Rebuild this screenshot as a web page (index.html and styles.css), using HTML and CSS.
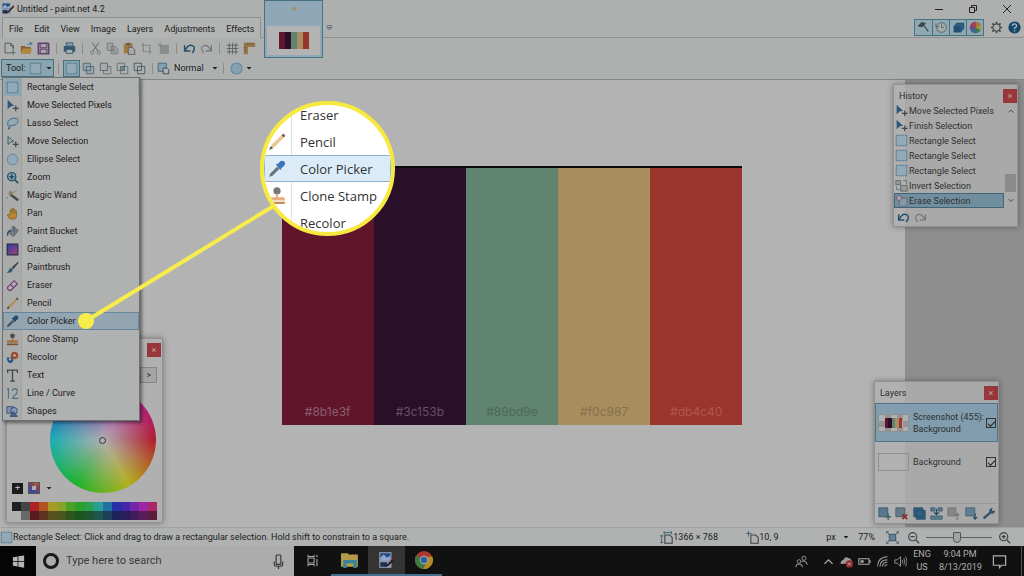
FILE: index.html
```html
<!DOCTYPE html>
<html lang="en">
<head>
<meta charset="utf-8">
<title>Untitled - paint.net 4.2</title>
<link rel="stylesheet" href="styles.css">
</head>
<body>
<svg class="sprite" aria-hidden="true">
  <defs>
    <linearGradient id="g-grad" x1="0" x2="1" y2="1"><stop offset="0" stop-color="#2a3bb0"/><stop offset="1" stop-color="#a8456f"/></linearGradient>
  </defs>
  <symbol id="i-rect" viewBox="0 0 16 16"><path d="M1.500 1.500h13v13h-13z" fill="#92a9b8" stroke="#456b86" stroke-dasharray="2 .6"/></symbol>
  <symbol id="i-movepx" viewBox="0 0 16 16"><path d="M2 1l8 7.500-4 .5-4 3.500z" fill="#2c5577"/><path d="M12 8v7M8.500 11.500h7" stroke="#444" stroke-width="1.500"/></symbol>
  <symbol id="i-movesel" viewBox="0 0 16 16"><path d="M2.500 2l7 6-3.500.5-3.500 3z" fill="none" stroke="#3d5c66" stroke-width="1.200"/><path d="M12 8v7M8.500 11.500h7" stroke="#444" stroke-width="1.500"/></symbol>
  <symbol id="i-lasso" viewBox="0 0 16 16"><path d="M2 8C2 3 8 1 13 1.500c3 1 2 7-2 8.500-3 1-5-.5-6.500 1C7 12 5 15 2.500 15c2-2 .5-3.500 0-4.500z" fill="#92a9b8" stroke="#3f6686" stroke-width="1.200"/></symbol>
  <symbol id="i-ellipse" viewBox="0 0 16 16"><circle cx="8" cy="8" r="6.500" fill="#92a9b8" stroke="#57809c"/></symbol>
  <symbol id="i-quality" viewBox="0 0 16 16"><path d="M5 1.500h6v1h2v2h1.500v7H13v2h-2v1H5v-1H3v-2H1.500v-7H3v-2h2z" fill="#86a2b2" stroke="#57809c"/></symbol>
  <symbol id="i-zoom" viewBox="0 0 16 16"><circle cx="7" cy="7" r="5" fill="#8ca7b7" stroke="#2e566b" stroke-width="1.800"/><path d="M7 4v6M4 7h6M11 11l4 4" stroke="#294d62" stroke-width="2"/></symbol>
  <symbol id="i-zoomout" viewBox="0 0 16 16"><circle cx="7" cy="7" r="5" fill="none" stroke="#3c454a" stroke-width="1.400"/><path d="M4.500 7h5M11 11l4 4" stroke="#3c454a" stroke-width="1.600"/></symbol>
  <symbol id="i-zoomin" viewBox="0 0 16 16"><circle cx="7" cy="7" r="5" fill="none" stroke="#3c454a" stroke-width="1.400"/><path d="M4.500 7h5M7 4.500v5M11 11l4 4" stroke="#3c454a" stroke-width="1.600"/></symbol>
  <symbol id="i-wand" viewBox="0 0 16 16"><path d="M6 7l9 7" stroke="#444" stroke-width="3"/><path d="M1 6l3-1 1-4 2 3 3-1-2 3 1 2-3-1-2 2-.5-3z" fill="#8b7a60"/><path d="M10 4l3-2M2 10l-1 2" stroke="#7b6a46"/></symbol>
  <symbol id="i-pan" viewBox="0 0 16 16"><path d="M5 9V4q1-1.500 2 0V2q1-1.500 2 0v1q1-1.500 2 0v2q1-1 2 0v6q0 4-4 4H7q-3 0-5.500-5 1-2 3.500 0z" fill="#b98636" stroke="#77551f" stroke-width=".8"/><path d="M7 4v4M9 3v5M11 5v3" stroke="#77551f" stroke-width=".7"/></symbol>
  <symbol id="i-bucket" viewBox="0 0 16 16"><path d="M5 7l5-5 5 5-6 7-4-3z" fill="#778086" stroke="#4b5359"/><path d="M10 9V3q-2-3-3 0" fill="none" stroke="#3d454a"/><path d="M6 6q-5 0-5 6 1 3 2 0 0-4 4-4z" fill="#2c5070"/></symbol>
  <symbol id="i-gradient" viewBox="0 0 16 16"><path d="M1.500 1.500h13v13h-13z" fill="url(#g-grad)" stroke="#282d43" stroke-width="1.500"/></symbol>
  <symbol id="i-brush" viewBox="0 0 16 16"><path d="M14.500 1L7 8l2 2 6.500-8z" fill="#3b4246"/><path d="M6.500 8.500l2 2q-1 5-8 3.500 3-1 3-3t3-2.500z" fill="#2c5a7a"/></symbol>
  <symbol id="i-eraser" viewBox="0 0 16 16"><path d="M2 10L10 2l4 4-8 8H4l-2-2z" fill="#b7a7b5" stroke="#6d3472" stroke-width="1.300"/><path d="M5.500 6.500l4 4" stroke="#6d3472" stroke-width="1.300"/></symbol>
  <symbol id="i-pencil" viewBox="0 0 16 16"><path d="M2 14l1.500-4L12 2l2 2-8 8.500z" fill="#b58e5e"/><path d="M12 2l1.500-1.500 2 2L14 4z" fill="#5b4548"/><path d="M1 15l1.500-3.500 2 2z" fill="#383535"/></symbol>
  <symbol id="i-picker" viewBox="0 0 16 16"><path d="M1 15l1-3 6-6 2 2-6 6z" fill="#4e555b"/><path d="M7 4l2-1 2-2q3-1 4 1 1 2-1 3.500l-2 1.500-1 2z" fill="#254a70"/></symbol>
  <symbol id="i-stamp" viewBox="0 0 16 16"><circle cx="8" cy="3.500" r="3" fill="#4e4c4a"/><path d="M7 6h2v3h5q1 0 1 3H1q0-3 1-3h5z" fill="#a2703f"/><path d="M1 13h14v2H1z" fill="#76522f"/></symbol>
  <symbol id="i-recolor" viewBox="0 0 16 16"><circle cx="10.500" cy="5.500" r="4.500" fill="#a14b27"/><circle cx="10.500" cy="5.500" r="1.700" fill="#b8aaa3"/><path d="M1 8h7l1 4q-1 3-4 3-4-1-4-7z" fill="#2b5583"/><circle cx="5" cy="10" r="1.500" fill="#9cacba"/></symbol>
  <symbol id="i-text" viewBox="0 0 16 16"><path d="M2 5V1.500h12V5M8 1.500V15M5 15h6" fill="none" stroke="#41464c" stroke-width="1.600"/></symbol>
  <symbol id="i-line" viewBox="0 0 16 16"><path d="M1 3l2-1v12M8 5q0-3 3-3t3 3q0 3-3 5t-3 4h7" fill="none" stroke="#4e6f80" stroke-width="1.400"/></symbol>
  <symbol id="i-shapes" viewBox="0 0 16 16"><path d="M1 2h8v8H1z" fill="#7d8faf" stroke="#2f4668"/><circle cx="10" cy="7" r="4" fill="#8796b5" stroke="#2f4668"/><path d="M9 8l5 6H5z" fill="#50618c" stroke="#2f4668"/></symbol>
  <symbol id="i-new" viewBox="0 0 16 16"><path d="M2.500 1.500h7l3 3v3M12.500 10v-5.500h-3v-3M2.500 1.500v12h7" fill="none" stroke="#4a4c4c"/><path d="M12.500 10v6M9.500 13h6" stroke="#3e6651"/></symbol>
  <symbol id="i-open" viewBox="0 0 16 16"><path d="M1 5h5l1 1h6v8H1z" fill="#83602c"/><path d="M3 8h12l-2 6H1z" fill="#b3873f"/><path d="M9 4q2-3 5-2M12 0l3 2-3 2" fill="none" stroke="#31658b"/></symbol>
  <symbol id="i-save" viewBox="0 0 16 16"><path d="M1.500 1.500h12l1 1v12h-13z" fill="#9b84a0" stroke="#5d3765" stroke-width="1.600"/><path d="M4 2h8v5H4zM4 9h8v5H4z" fill="#a8a6a9" stroke="#5d3765"/></symbol>
  <symbol id="i-print" viewBox="0 0 16 16"><path d="M4 1h8v4H4z" fill="#91a0a8" stroke="#2f4e62"/><path d="M1 5h14v7H1z" fill="#345a74"/><path d="M4 9h8v5H4z" fill="#aaafb1" stroke="#2f4e62"/></symbol>
  <symbol id="i-cut" viewBox="0 0 16 16"><path d="M4 1l7 10M12 1L5 11" stroke="#6e7070" stroke-width="1.300"/><circle cx="4" cy="13" r="2" fill="none" stroke="#6e7070"/><circle cx="12" cy="13" r="2" fill="none" stroke="#6e7070"/></symbol>
  <symbol id="i-copy" viewBox="0 0 16 16"><path d="M1.500 1.500h7v9h-7zM6.500 5.500h5l3 3v6h-8z" fill="#a1a3a2" stroke="#737575"/><path d="M8 9h4M8 12h4" stroke="#737575"/></symbol>
  <symbol id="i-paste" viewBox="0 0 16 16"><path d="M1 2h11v12H1z" fill="#a07a3f"/><path d="M4 1h5v3H4z" fill="#625a4c"/><path d="M6.500 6.500h5l3 3v6h-8z" fill="#a7a8a8" stroke="#555"/></symbol>
  <symbol id="i-crop" viewBox="0 0 16 16"><path d="M4 1v11h11M1 4h11v11" fill="none" stroke="#858787" stroke-width="1.500"/></symbol>
  <symbol id="i-desel" viewBox="0 0 16 16"><path d="M4 4h10v10H4z" fill="#8c8e8e" stroke="#777" stroke-dasharray="2 1"/><path d="M1 1l5 5M6 1L1 6" stroke="#777"/></symbol>
  <symbol id="i-undo" viewBox="0 0 16 16"><path d="M2 4v7h7M2.500 10.500q4-8 9-6 5 2 0 9" fill="none" stroke="#23516d" stroke-width="1.800"/></symbol>
  <symbol id="i-redo" viewBox="0 0 16 16"><path d="M14 4v7H7M13.500 10.500q-4-8-9-6-5 2 0 9" fill="none" stroke="#6f7475" stroke-width="1.400"/></symbol>
  <symbol id="i-grid" viewBox="0 0 16 16"><path d="M4 1v14M8 1v14M12 1v14M1 4h14M1 8h14M1 12h14" stroke="#575959"/></symbol>
  <symbol id="i-ruler" viewBox="0 0 16 16"><path d="M1 1h14v5H6v9H1z" fill="#94754a"/><path d="M6 1v2M9 1v2M12 1v2M1 7h2M1 10h2" stroke="#5b482c"/></symbol>
  <symbol id="i-sel2" viewBox="0 0 16 16"><path d="M1.500 1.500h9v9h-9zM5.500 5.500h9v9h-9z" fill="#8fa5af" stroke="#4a626d"/></symbol>
  <symbol id="i-sel3" viewBox="0 0 16 16"><path d="M5.500 5.500h9v9h-9z" fill="none" stroke="#62686a"/><path d="M1.500 1.500h9v9h-9z" fill="#a5abad" stroke="#50605f"/></symbol>
  <symbol id="i-sel4" viewBox="0 0 16 16"><path d="M1.500 1.500h9v9h-9zM5.500 5.500h9v9h-9z" fill="none" stroke="#62686a"/><path d="M6 6h4v4H6z" fill="#7a99aa" stroke="#4b6573"/></symbol>
  <symbol id="i-sel5" viewBox="0 0 16 16"><path d="M1.500 1.500h9v9h-9zM5.500 5.500h9v9h-9z" fill="none" stroke="#4d5e66" stroke-width="1.200"/></symbol>
  <symbol id="i-blend" viewBox="0 0 16 16"><path d="M1.500 1.500h10v10h-10z" fill="#83a0b0" stroke="#3b5f72"/><path d="M7.500 7.500h5l2 2v5h-7z" fill="#afb1b1" stroke="#383d40"/></symbol>
  <symbol id="i-down" viewBox="0 0 8 8"><path d="M1.500 3h5L4 5.500z" fill="#222"/></symbol>
  <symbol id="i-hammer" viewBox="0 0 16 16"><path d="M2 6l4-4 4 1-4 4zM8 5l6 8" fill="#3c4548" stroke="#3c4548" stroke-width="1.300"/></symbol>
  <symbol id="i-clock" viewBox="0 0 16 16"><circle cx="8" cy="8" r="6" fill="#a7aaaa" stroke="#687577" stroke-width="1.300"/><path d="M8 4v4h3M1 3v4h4" fill="none" stroke="#526166"/></symbol>
  <symbol id="i-layers" viewBox="0 0 16 16"><path d="M2 6l4-4h9v7l-4 5H2z" fill="#234c70"/><path d="M2 6h9v8M11 6l4-4M4 4h9v7" fill="none" stroke="#46718f" stroke-width=".8"/></symbol>
  <symbol id="i-colors" viewBox="0 0 16 16"><circle cx="8" cy="8" r="7" fill="#84427d"/><path d="M8 8V1a7 7 0 0 1 6 3.500z" fill="#a8772d"/><path d="M8 8l6-3.500a7 7 0 0 1 0 7z" fill="#a59a34"/><path d="M8 8l6 3.500A7 7 0 0 1 8 15z" fill="#397a4c"/><path d="M8 8v7a7 7 0 0 1-6-3.500z" fill="#2f6c90"/><path d="M8 8L2 4.500A7 7 0 0 1 8 1z" fill="#a6414e"/></symbol>
  <symbol id="i-gear" viewBox="0 0 16 16"><circle cx="8" cy="8" r="4.500" fill="none" stroke="#40474a" stroke-width="1.500"/><path d="M8 1v2M8 13v2M1 8h2M13 8h2M3 3l1.500 1.500M11.500 11.500L13 13M13 3l-1.500 1.500M4.500 11.500L3 13" stroke="#40474a" stroke-width="2"/></symbol>
  <symbol id="i-help" viewBox="0 0 16 16"><circle cx="8" cy="8" r="7.500" fill="#174668"/><path d="M5.500 6q0-2.500 2.500-2.500T10.500 6q0 1.500-2.500 2.500v1.500M8 11.500v1.500" fill="none" stroke="#b3bcc2" stroke-width="1.500"/></symbol>
  <symbol id="i-logo" viewBox="0 0 16 16"><path d="M1 1h11v14H1z" fill="#8d9aab"/><path d="M2 2h9v6H2z" fill="#234a86"/><path d="M2 6l3-3 3 3 3-2v4H2z" fill="#8fa9c6"/><path d="M2 10h6v4H2z" fill="#1f2f52"/><path d="M15.500 4l-7 7.500-3 2.500 4-1 6.500-7z" fill="#2a1c28"/><path d="M15.500 4l-3 3.200 1.200 1.200L16 6z" fill="#6d2a2f"/></symbol>
  <symbol id="i-invert" viewBox="0 0 16 16"><path d="M1 2h6v5H1zM7 8h8v7H7z" fill="#999" stroke="#5d6265"/><path d="M10 2h4v4M2 9v4h4" fill="none" stroke="#536779"/></symbol>
  <symbol id="i-erasesel" viewBox="0 0 16 16"><path d="M5 5h10v10H5z" fill="#8799a7" stroke="#566473"/><path d="M1 5l4-4 4 4-4 4z" fill="#aaa0ab" stroke="#6c4b72"/></symbol>
  <symbol id="i-layadd" viewBox="0 0 16 16"><path d="M1 1h11v11H1z" fill="#54788f" stroke="#345a73"/><path d="M12.500 8v8M8.500 12h8" stroke="#3d6656" stroke-width="1.600"/></symbol>
  <symbol id="i-laydel" viewBox="0 0 16 16"><path d="M1 1h11v11H1z" fill="#667b87" stroke="#405b6c"/><path d="M9 9l6 6M15 9l-6 6" stroke="#8d292b" stroke-width="2"/></symbol>
  <symbol id="i-laydup" viewBox="0 0 16 16"><path d="M1 1h11v11H1zM4 4h11v11H4z" fill="#315e7d" stroke="#224c69"/></symbol>
  <symbol id="i-laymerge" viewBox="0 0 16 16"><path d="M1 1h5v4H1zM10 1h5v4h-5zM1 11h14v4H1z" fill="#5a7b8e" stroke="#395c70"/><path d="M8 2v7M5 6.500l3 3 3-3" fill="none" stroke="#234c64" stroke-width="1.500"/></symbol>
  <symbol id="i-layup" viewBox="0 0 16 16"><path d="M1 1h10v10H1z" fill="#858787" stroke="#777"/><path d="M12.500 16V8M10 10.500L12.500 8l2.500 2.500" fill="none" stroke="#717373" stroke-width="1.400"/></symbol>
  <symbol id="i-laydown" viewBox="0 0 16 16"><path d="M1 1h11v10H1z" fill="#607e90" stroke="#395d73"/><path d="M12.500 8v7M10 12.500l2.500 2.500 2.500-2.500" fill="none" stroke="#244b67" stroke-width="1.500"/></symbol>
  <symbol id="i-wrench" viewBox="0 0 16 16"><path d="M1 13l8-7q-1-4 4-5l-1 3 2 1 2-1q0 5-5 4l-8 7z" fill="#2d536e"/></symbol>
  <symbol id="i-size" viewBox="0 0 16 16"><path d="M6 5h6l3 3v7H6z" fill="none" stroke="#3b4144" stroke-width="1.300"/><path d="M5 2h9M5 0v4M14 0v4M2 5v10M0 6h4M0 14h4" stroke="#31566b"/></symbol>
  <symbol id="i-pos" viewBox="0 0 16 16"><path d="M6 5h6l3 3v7H6z" fill="none" stroke="#3b4144" stroke-width="1.300"/><path d="M0 3h7M3 0v7" stroke="#31566b"/></symbol>
  <symbol id="i-fit" viewBox="0 0 16 16"><path d="M4 4h8v8H4z" fill="#648093" stroke="#274a61"/><path d="M1 1l4 4M15 1l-4 4M1 15l4-4M15 15l-4-4M0 4V0h4M12 0h4v4M0 12v4h4M12 16h4v-4" stroke="#31546a" fill="none" stroke-width="1.200"/></symbol>
  <symbol id="i-win" viewBox="0 0 16 16"><path d="M2 3.500l5-.8v5H2zM7.800 2.500L14 1.500v6.200H7.800zM2 8.400h5v5l-5-.8zM7.800 8.400H14v6.200l-6.200-1z" fill="#b5b5b5"/></symbol>
  <symbol id="i-mic" viewBox="0 0 16 16"><rect x="5.500" y="1" width="5" height="10" rx="1" fill="none" stroke="#333" stroke-width="1.200"/><path d="M3.500 8v3q0 2 2.500 2h4q2.500 0 2.500-2V8M8 13v3" fill="none" stroke="#333" stroke-width="1.200"/></symbol>
  <symbol id="i-tasks" viewBox="0 0 16 16"><path d="M2.500 5h7.500v6H2.500zM2.500 1v2H10V1M2.500 15v-2H10v2M13.500 1v3M13.500 6v9" fill="none" stroke="#a8a8a8" stroke-width="1.300"/></symbol>
  <symbol id="i-folder" viewBox="0 0 16 16"><path d="M0 2h6l1 1h8v11H0z" fill="#b49a4b"/><path d="M2 8h12v7h-3v-4H5v4H2z" fill="#3a8399"/></symbol>
  <symbol id="i-chrome" viewBox="0 0 16 16"><circle cx="8" cy="8" r="8" fill="#ac382f"/><path d="M8 8L1 4a8 8 0 0 0 6 12l4-7z" fill="#3a7d3f"/><path d="M8 5h7.400A8 8 0 0 1 7 16l4-7z" fill="#b38c27"/><circle cx="8" cy="8" r="3.700" fill="#b2b2b2"/><circle cx="8" cy="8" r="2.900" fill="#2c5f9f"/></symbol>
  <symbol id="i-people" viewBox="0 0 16 16"><circle cx="5" cy="8" r="2.200" fill="none" stroke="#aaa"/><circle cx="11" cy="4" r="2.500" fill="none" stroke="#aaa"/><path d="M1 15q0-4 4-4t4 4M8 8q3-2 6 1l1 3" fill="none" stroke="#aaa" stroke-width="1.200"/></symbol>
  <symbol id="i-cloud" viewBox="0 0 16 16"><path d="M1 11q-1-4 3-5 2-5 7-2 4 1 4 6z" fill="#999"/><circle cx="11.500" cy="11" r="4.500" fill="#922a2c"/><path d="M9.500 9l4 4M13.500 9l-4 4" stroke="#bbb"/></symbol>
  <symbol id="i-battery" viewBox="0 0 16 16"><path d="M1 4.500h12.500v7H1zM15 6.500v3" fill="none" stroke="#aaa" stroke-width="1.300"/><path d="M3 6.500h4v3H3z" fill="#aaa"/></symbol>
  <symbol id="i-wifi" viewBox="0 0 16 16"><path d="M2 14Q2 3 14 2M5 14q0-8 9-8M8 14q0-5 6-5M11 14q0-2 3-2" fill="none" stroke="#999" stroke-width="1.300"/></symbol>
  <symbol id="i-volume" viewBox="0 0 16 16"><path d="M1 6h3l4-4v12l-4-4H1z" fill="none" stroke="#aaa"/><path d="M10 6q1.500 2 0 4M12 4q3 4 0 8M14 2q4 6 0 12" fill="none" stroke="#aaa"/></symbol>
  <symbol id="i-note" viewBox="0 0 16 16"><path d="M1.500 2h13v10H10l-2 2.500V12H1.500z" fill="none" stroke="#b0b0b0" stroke-width="1.300"/></symbol>
  <symbol id="i-up" viewBox="0 0 16 16"><path d="M3 11l5-5 5 5" fill="none" stroke="currentColor" stroke-width="1.500"/></symbol>
  <symbol id="i-dn" viewBox="0 0 16 16"><path d="M3 6l5 5 5-5" fill="none" stroke="currentColor" stroke-width="1.500"/></symbol>
</svg>

<div class="desktop">
  <header class="ribbon">
    <div class="titlebar">
      <svg class="ico"><use href="#i-logo"/></svg>
      <h1 class="title">Untitled - paint.net 4.2</h1>
      <div class="winbtns">
        <button aria-label="Minimize"><svg class="glyph" viewBox="0 0 10 10"><path d="M1 5.500h8"/></svg></button>
        <button aria-label="Restore"><svg class="glyph" viewBox="0 0 10 10"><path d="M1.500 3.500h5v5h-5zM3.500 3V1.500h5v5H7"/></svg></button>
        <button aria-label="Close"><svg class="glyph" viewBox="0 0 10 10"><path d="M1 1l8 8M9 1l-8 8"/></svg></button>
      </div>
    </div>
    <div class="menurow">
      <nav class="menubar">
        <button>File</button><button>Edit</button><button>View</button><button>Image</button><button>Layers</button><button>Adjustments</button><button>Effects</button>
      </nav>
      <div class="menufill"></div>
      <div class="utility">
        <div class="toggles">
          <button aria-label="Tools"><svg class="ico"><use href="#i-hammer"/></svg></button>
          <button aria-label="History"><svg class="ico"><use href="#i-clock"/></svg></button>
          <button aria-label="Layers"><svg class="ico"><use href="#i-layers"/></svg></button>
          <button aria-label="Colors"><svg class="ico"><use href="#i-colors"/></svg></button>
        </div>
        <button class="slot" aria-label="Settings"><svg class="ico"><use href="#i-gear"/></svg></button>
        <button class="slot" aria-label="Help"><svg class="ico"><use href="#i-help"/></svg></button>
      </div>
    </div>
    <div class="toolrow">
      <button class="slot" aria-label="New"><svg class="ico"><use href="#i-new"/></svg></button>
      <button class="slot" aria-label="Open"><svg class="ico"><use href="#i-open"/></svg></button>
      <button class="slot" aria-label="Save"><svg class="ico"><use href="#i-save"/></svg></button>
      <i class="sep"></i>
      <button class="slot" aria-label="Print"><svg class="ico"><use href="#i-print"/></svg></button>
      <i class="sep"></i>
      <button class="slot" aria-label="Cut"><svg class="ico"><use href="#i-cut"/></svg></button>
      <button class="slot" aria-label="Copy"><svg class="ico"><use href="#i-copy"/></svg></button>
      <button class="slot" aria-label="Paste"><svg class="ico"><use href="#i-paste"/></svg></button>
      <button class="slot" aria-label="Crop"><svg class="ico"><use href="#i-crop"/></svg></button>
      <button class="slot" aria-label="Deselect"><svg class="ico"><use href="#i-desel"/></svg></button>
      <i class="sep"></i>
      <button class="slot" aria-label="Undo"><svg class="ico"><use href="#i-undo"/></svg></button>
      <button class="slot" aria-label="Redo"><svg class="ico"><use href="#i-redo"/></svg></button>
      <i class="sep"></i>
      <button class="slot" aria-label="Grid"><svg class="ico"><use href="#i-grid"/></svg></button>
      <button class="slot" aria-label="Rulers"><svg class="ico"><use href="#i-ruler"/></svg></button>
    </div>
    <div class="toolrow">
      <button class="toolpick">Tool:<svg class="ico"><use href="#i-rect"/></svg><svg class="caret"><use href="#i-down"/></svg></button>
      <i class="sep"></i>
      <button class="slot slot-on" aria-label="Replace"><svg class="ico"><use href="#i-rect"/></svg></button>
      <button class="slot" aria-label="Add"><svg class="ico"><use href="#i-sel2"/></svg></button>
      <button class="slot" aria-label="Subtract"><svg class="ico"><use href="#i-sel3"/></svg></button>
      <button class="slot" aria-label="Intersect"><svg class="ico"><use href="#i-sel4"/></svg></button>
      <button class="slot" aria-label="Invert"><svg class="ico"><use href="#i-sel5"/></svg></button>
      <i class="sep"></i>
      <svg class="ico"><use href="#i-blend"/></svg>
      <select class="plain mode" aria-label="Selection mode"><option>Normal</option></select>
      <svg class="caret"><use href="#i-down"/></svg>
      <i class="sep"></i>
      <button class="slot" aria-label="Quality"><svg class="ico"><use href="#i-quality"/></svg></button>
      <svg class="caret"><use href="#i-down"/></svg>
    </div>
    <button class="doctab" aria-label="Untitled">
      <span class="star">✦</span>
      <span class="docthumb"><span class="mini"><i class="c1"></i><i class="c2"></i><i class="c3"></i><i class="c4"></i><i class="c5"></i></span></span>
    </button>
    <button class="doclist" aria-label="Image list"><svg class="listglyph" viewBox="0 0 10 10"><path d="M2 3h6M2 5q3 4 6 0z"/></svg></button>
  </header>

  <main class="workspace">
    <div class="swatches">
      <div class="swatch c1">#8b1e3f</div>
      <div class="swatch c2">#3c153b</div>
      <div class="swatch c3">#89bd9e</div>
      <div class="swatch c4">#f0c987</div>
      <div class="swatch c5">#db4c40</div>
    </div>
  </main>

  <footer class="status">
    <svg class="ico"><use href="#i-rect"/></svg>
    <p class="hint">Rectangle Select: Click and drag to draw a rectangular selection. Hold shift to constrain to a square.</p>
    <span class="stat stat-size"><svg class="ico"><use href="#i-size"/></svg>1366 × 768</span>
    <span class="stat stat-pos"><svg class="ico"><use href="#i-pos"/></svg>10, 9</span>
    <div class="zoombar">
      <select class="plain unit" aria-label="Units"><option>px</option></select>
      <svg class="caret"><use href="#i-down"/></svg>
      <span class="percent">77%</span>
      <button class="slot" aria-label="Fit"><svg class="ico"><use href="#i-fit"/></svg></button>
      <button class="slot" aria-label="Zoom out"><svg class="ico"><use href="#i-zoomout"/></svg></button>
      <input class="zoom" type="range" aria-label="Zoom" min="0" max="100" value="47">
      <button class="slot" aria-label="Zoom in"><svg class="ico"><use href="#i-zoomin"/></svg></button>
    </div>
  </footer>

  <div class="taskbar">
    <button class="start" aria-label="Start"><svg class="ico-m"><use href="#i-win"/></svg></button>
    <div class="search">
      <i class="ring"></i>
      <input class="searchbox" type="text" placeholder="Type here to search" aria-label="Search">
      <svg class="ico-m"><use href="#i-mic"/></svg>
    </div>
    <button class="task" aria-label="Task view"><svg class="ico"><use href="#i-tasks"/></svg></button>
    <button class="task task-open" aria-label="File Explorer"><svg class="ico-l"><use href="#i-folder"/></svg></button>
    <button class="task task-open task-active" aria-label="paint.net"><svg class="ico-l"><use href="#i-logo"/></svg></button>
    <button class="task task-open" aria-label="Chrome"><svg class="ico-l"><use href="#i-chrome"/></svg></button>
    <div class="tray">
      <svg class="ico people"><use href="#i-people"/></svg>
      <svg class="ico"><use href="#i-up"/></svg>
      <svg class="ico"><use href="#i-cloud"/></svg>
      <svg class="ico"><use href="#i-battery"/></svg>
      <svg class="ico"><use href="#i-wifi"/></svg>
      <svg class="ico"><use href="#i-volume"/></svg>
      <p class="two lang">ENG<br>US</p>
      <p class="two clock">9:04 PM<br>8/13/2019</p>
      <svg class="ico-m note"><use href="#i-note"/></svg>
    </div>
  </div>

  <section class="panel colors" aria-label="Colors">
    <div class="panelhead"><button class="close" aria-label="Close">×</button></div>
    <button class="more" aria-label="More">&gt;</button>
    <div class="wheel"><i class="knob"></i></div>
    <div class="colorbtns">
      <button class="swap" aria-label="Add color">+</button>
      <button class="pal" aria-label="Palette"></button>
      <svg class="caret"><use href="#i-down"/></svg>
    </div>
    <div class="palette">
      <i style="background:#1e1e1e"></i><i style="background:#444"></i><i style="background:#ad2023"></i><i style="background:#ae5524"></i><i style="background:#aa9a25"></i><i style="background:#86a227"></i><i style="background:#4ba025"></i><i style="background:#2a9f2a"></i><i style="background:#28a052"></i><i style="background:#289f96"></i><i style="background:#2470a5"></i><i style="background:#242fa8"></i><i style="background:#4526a8"></i><i style="background:#7226a8"></i><i style="background:#a027a3"></i><i style="background:#a9286a"></i>
      <i></i><i style="background:#686868"></i><i style="background:#591a1d"></i><i style="background:#5c341d"></i><i style="background:#5a521d"></i><i style="background:#48561d"></i><i style="background:#2d551d"></i><i style="background:#1d551f"></i><i style="background:#1d5533"></i><i style="background:#1d5551"></i><i style="background:#1d3f59"></i><i style="background:#1d225a"></i><i style="background:#2b1d5a"></i><i style="background:#401d5a"></i><i style="background:#561d57"></i><i style="background:#5a1d3d"></i>
    </div>
  </section>

  <section class="panel history" aria-label="History">
    <div class="panelhead"><h2 class="panelname">History</h2><button class="close" aria-label="Close">×</button></div>
    <div class="histbody">
      <ol class="histlist">
        <li><svg class="ico"><use href="#i-movepx"/></svg>Move Selected Pixels</li>
        <li><svg class="ico"><use href="#i-movepx"/></svg>Finish Selection</li>
        <li><svg class="ico"><use href="#i-rect"/></svg>Rectangle Select</li>
        <li><svg class="ico"><use href="#i-rect"/></svg>Rectangle Select</li>
        <li><svg class="ico"><use href="#i-rect"/></svg>Rectangle Select</li>
        <li><svg class="ico"><use href="#i-invert"/></svg>Invert Selection</li>
        <li class="current"><svg class="ico"><use href="#i-erasesel"/></svg>Erase Selection</li>
      </ol>
      <div class="scroll"><svg class="caret"><use href="#i-up"/></svg><i class="scrollthumb"></i><svg class="caret"><use href="#i-dn"/></svg></div>
    </div>
    <div class="histfoot">
      <button class="slot" aria-label="Undo"><svg class="ico"><use href="#i-undo"/></svg></button>
      <button class="slot" aria-label="Redo"><svg class="ico"><use href="#i-redo"/></svg></button>
    </div>
  </section>

  <section class="panel layers" aria-label="Layers">
    <div class="panelhead"><h2 class="panelname">Layers</h2><button class="close" aria-label="Close">×</button></div>
    <div class="layer layer-on">
      <span class="layerthumb checker"><span class="mini"><i class="c1"></i><i class="c2"></i><i class="c3"></i><i class="c4"></i><i class="c5"></i></span></span>
      <label class="layername" for="l1">Screenshot (455):<br>Background</label>
      <input id="l1" class="tick" type="checkbox" checked>
    </div>
    <div class="layer">
      <span class="layerthumb"></span>
      <label class="layername" for="l2">Background</label>
      <input id="l2" class="tick" type="checkbox" checked>
    </div>
    <div class="layerfoot">
      <button class="slot" aria-label="Add layer"><svg class="ico"><use href="#i-layadd"/></svg></button>
      <button class="slot" aria-label="Delete layer"><svg class="ico"><use href="#i-laydel"/></svg></button>
      <button class="slot" aria-label="Duplicate layer"><svg class="ico"><use href="#i-laydup"/></svg></button>
      <button class="slot" aria-label="Merge layer"><svg class="ico"><use href="#i-laymerge"/></svg></button>
      <button class="slot" aria-label="Move up"><svg class="ico"><use href="#i-layup"/></svg></button>
      <button class="slot" aria-label="Move down"><svg class="ico"><use href="#i-laydown"/></svg></button>
      <button class="slot" aria-label="Properties"><svg class="ico"><use href="#i-wrench"/></svg></button>
    </div>
  </section>

  <div class="toolmenu" role="menu">
    <button class="first" role="menuitem"><svg class="ico"><use href="#i-rect"/></svg>Rectangle Select</button>
    <button role="menuitem"><svg class="ico"><use href="#i-movepx"/></svg>Move Selected Pixels</button>
    <button role="menuitem"><svg class="ico"><use href="#i-lasso"/></svg>Lasso Select</button>
    <button role="menuitem"><svg class="ico"><use href="#i-movesel"/></svg>Move Selection</button>
    <button role="menuitem"><svg class="ico"><use href="#i-ellipse"/></svg>Ellipse Select</button>
    <button role="menuitem"><svg class="ico"><use href="#i-zoom"/></svg>Zoom</button>
    <button role="menuitem"><svg class="ico"><use href="#i-wand"/></svg>Magic Wand</button>
    <button role="menuitem"><svg class="ico"><use href="#i-pan"/></svg>Pan</button>
    <button role="menuitem"><svg class="ico"><use href="#i-bucket"/></svg>Paint Bucket</button>
    <button role="menuitem"><svg class="ico"><use href="#i-gradient"/></svg>Gradient</button>
    <button role="menuitem"><svg class="ico"><use href="#i-brush"/></svg>Paintbrush</button>
    <button role="menuitem"><svg class="ico"><use href="#i-eraser"/></svg>Eraser</button>
    <button role="menuitem"><svg class="ico"><use href="#i-pencil"/></svg>Pencil</button>
    <button class="picked" role="menuitem"><svg class="ico"><use href="#i-picker"/></svg>Color Picker</button>
    <button role="menuitem"><svg class="ico"><use href="#i-stamp"/></svg>Clone Stamp</button>
    <button role="menuitem"><svg class="ico"><use href="#i-recolor"/></svg>Recolor</button>
    <button role="menuitem"><svg class="ico"><use href="#i-text"/></svg>Text</button>
    <button role="menuitem"><svg class="ico"><use href="#i-line"/></svg>Line / Curve</button>
    <button role="menuitem"><svg class="ico"><use href="#i-shapes"/></svg>Shapes</button>
  </div>

  <svg class="pointer" viewBox="0 0 210 140" aria-hidden="true"><path d="M6 131L200 12" stroke="#f7ec4b" stroke-width="4"/><circle cx="6" cy="131" r="8" fill="#f7ec4b"/></svg>
  <div class="lens">
    <ul class="lenslist">
      <li>Eraser</li>
      <li><svg class="ico-l" viewBox="0 0 16 16"><path d="M2 14l1.500-4L12 2l2 2-8 8.500z" fill="#ebc795"/><path d="M12 2l1.500-1.500 2 2L14 4z" fill="#7b5b60"/><path d="M1 15l1.500-3.500 2 2z" fill="#555"/></svg>Pencil</li>
      <li class="lenspick"><svg class="ico-l" viewBox="0 0 16 16"><path d="M1 15l1-3 6-6 2 2-6 6z" fill="#6c747b"/><path d="M7 4l2-1 2-2q3-1 4 1 1 2-1 3.500l-2 1.500-1 2z" fill="#3c75bb"/></svg>Color Picker</li>
      <li><svg class="ico-l" viewBox="0 0 16 16"><circle cx="8" cy="3.500" r="3.200" fill="#777"/><path d="M7 6h2v3h5q1 0 1 3H1q0-3 1-3h5z" fill="#e9ad7c"/><path d="M1 13h14v2H1z" fill="#c78a5b"/></svg>Clone Stamp</li>
      <li>Recolor</li>
    </ul>
  </div>
</div>
</body>
</html>
```
FILE: styles.css
```css
* { box-sizing: border-box; }
body {
  margin: 0;
  font: 9px/12px Roboto, "Open Sans", sans-serif;
  color: #202020;
  background: #b0b2b1;
}
button, input, select { font: inherit; color: inherit; margin: 0; padding: 0; border: 0; background: none; }
h1, h2, p, ol, ul { margin: 0; padding: 0; font-size: inherit; font-weight: 400; list-style: none; }
i { display: block; }
.sprite { position: absolute; width: 0; height: 0; }
.ico { width: 13px; height: 13px; flex: none; }
.ico-m { width: 15px; height: 15px; flex: none; }
.ico-l { width: 18px; height: 18px; flex: none; }
.caret { width: 8px; height: 8px; flex: none; }
.glyph { width: 10px; height: 10px; fill: none; stroke: #222; }
.plain { appearance: none; }

.desktop { position: relative; display: flex; flex-direction: column; height: 100vh; overflow: hidden; }

.ribbon { position: relative; padding-bottom: 1px; background: #adb0af; border-bottom: 1px solid #858786; }
.titlebar { display: flex; align-items: center; height: 17px; padding-left: 1px; gap: 3px; }
.title { flex: 1; font-size: 9px; }
.winbtns { display: flex; }
.winbtns button { width: 34px; height: 16px; display: grid; place-items: center; }
.menurow { display: flex; height: 21px; }
.menubar { display: flex; align-items: center; gap: 11px; margin-left: 2px; padding: 2px 6px 0; border: 1px solid #8c9292; border-bottom: 0; background: #b2b4b3; }
.menufill { flex: 1; border-bottom: 1px solid #8c9292; }
.utility { display: flex; align-items: center; gap: 1px; padding-right: 1px; border-bottom: 1px solid #8c9292; }
.toggles { display: flex; border: 1px solid #45727f; margin-right: 3px; }
.toggles button { width: 17px; height: 15px; display: grid; place-items: center; background: #90a8b2; }
.toggles button + button { border-left: 1px solid #45727f; }
.slot { width: 17px; height: 17px; display: grid; place-items: center; flex: none; }
.slot-on { background: #87a3b0; border: 1px solid #46717e; }
.toolrow { display: flex; align-items: center; height: 20px; padding-left: 1px; }
.sep { width: 1px; height: 11px; margin: 0 4px; background: #8a8d8c; flex: none; }
.toolpick { display: flex; align-items: center; gap: 3px; width: 53px; height: 18px; padding: 0 4px; border: 1px solid #46717e; background: #8ba5b0; white-space: nowrap; }
.mode { width: 34px; margin: 0 3px 0 4px; }
.doctab { position: absolute; top: 0; left: 264px; width: 59px; height: 58px; padding: 2px; display: flex; flex-direction: column; border: 1px solid #46717e; background: #8fa7b7; }
.star { height: 23px; padding-left: 2px; line-height: 12px; color: #b08c54; }
.docthumb { flex: 1; align-self: stretch; display: grid; place-items: center; background: #b3b3b3; }
.mini { display: flex; width: 30px; height: 17px; }
.mini i { flex: 1; }
.doclist { position: absolute; top: 23px; left: 325px; }
.listglyph { width: 9px; height: 9px; fill: none; stroke: #556b7a; }

.c1 { background: #61152c; }
.c2 { background: #2a0f29; }
.c3 { background: #60846f; }
.c4 { background: #a88d5e; }
.c5 { background: #99352d; }

.workspace { flex: 1; display: flex; justify-content: center; align-items: flex-start; padding-top: 86px; background: linear-gradient(to left, #8e8e8e 119px, #b3b3b3 119px); }
.swatches { display: flex; width: 45%; height: 259px; border-top: 2px solid #0c0910; }
.swatch { flex: 1; display: flex; align-items: flex-end; justify-content: center; padding-bottom: 6px; font: 12px/14px Inter, sans-serif; color: #87606c; }
.swatch.c2 { color: #675266; }
.swatch.c3 { color: #4b6957; }
.swatch.c4 { color: #85704c; }
.swatch.c5 { color: #b2574e; }

.status { display: flex; align-items: center; height: 19px; background: #b0b2b1; border-top: 1px solid #a0a2a1; }
.hint { flex: 1; white-space: nowrap; }
.stat { display: flex; align-items: center; white-space: nowrap; }
.stat-size { width: 86px; }
.stat-pos { width: 80px; }
.zoombar { display: flex; align-items: center; gap: 4px; padding-right: 11px; }
.unit { width: 12px; }
.percent { margin: 0 5px 0 4px; }
.zoom { appearance: none; width: 66px; height: 12px; background: linear-gradient(#5d6060, #5d6060) center / 100% 1px no-repeat; }
.zoom::-webkit-slider-thumb { appearance: none; width: 8px; height: 11px; border: 1px solid #555; border-radius: 1px 1px 4px 4px; background: #a2a4a4; }

.taskbar { display: flex; height: 30px; background: #111; color: #b0b0b0; }
.start { width: 36px; display: grid; place-items: center; background: #050505; }
.search { width: 258px; display: flex; align-items: center; gap: 7px; padding: 0 8px 0 7px; background: #acacac; }
.ring { width: 16px; height: 16px; border: 3px solid #1a1a1a; border-radius: 50%; flex: none; }
.searchbox { flex: 1; min-width: 0; font-size: 11px; color: #333; outline: 0; }
.searchbox::placeholder { color: #3a3a3a; opacity: 1; }
.task { width: 37px; display: grid; place-items: center; border-bottom: 2px solid transparent; }
.task-open { border-bottom-color: #456f8d; }
.task-active { background: #343434; }
.tray { flex: 1; display: flex; align-items: center; justify-content: flex-end; gap: 5px; border-right: 1px solid #555; margin-right: 2px; }
.people { margin-right: 9px; }
.two { text-align: center; font-size: 9px; line-height: 13px; }
.lang { width: 18px; margin-left: 1px; }
.clock { width: 42px; margin-left: 3px; }
.note { margin: 0 14px 0 6px; }

.panel { position: absolute; display: flex; flex-direction: column; background: rgba(176, 176, 176, .8); border: 1px solid #929292; box-shadow: 0 0 6px rgba(0, 0, 0, .35); color: #303030; }
.panelhead { display: flex; align-items: flex-start; justify-content: space-between; height: 19px; padding: 4px 0 0 5px; }
.panelname { line-height: 14px; }
.close { width: 14px; height: 14px; margin-left: auto; background: #97373b; color: #c3a5a7; line-height: 12px; }

.colors { left: 6px; bottom: 53px; width: 157px; height: 185px; padding: 0 5px; background: #b0b0b0; }
.colors .panelhead { padding-right: 0; height: 28px; margin-right: -4px; }
.more { align-self: flex-end; width: 17px; height: 16px; border: 1px solid #858585; background: #a4a4a4; }
.wheel { align-self: center; width: 106px; height: 106px; margin: 4px 0 -11px 36px; display: grid; place-items: center; border-radius: 50%; flex: none;
  background: radial-gradient(closest-side, #b0aeb0 0, rgba(176, 174, 176, 0) 95%), conic-gradient(from 90deg, #b21f30, #b3b01f 60deg, #1fb32b 120deg, #1fadb3 180deg, #2a3ab0 240deg, #b31fa6 300deg, #b21f30); }
.knob { width: 7px; height: 7px; border: 1px solid #333; border-radius: 50%; }
.colorbtns { display: flex; align-items: center; gap: 5px; }
.swap { width: 11px; height: 11px; background: #1c1c1c; color: #bbb; line-height: 10px; }
.pal { width: 12px; height: 12px; border: 1px solid #555; background: conic-gradient(#b5b5b5, #a5a5a5) center / 4px 4px no-repeat, conic-gradient(#a06a3a, #8a3a55, #3a4c94, #4a4a98, #a03a3a); }
.palette { display: grid; grid-template-columns: repeat(16, 1fr); grid-auto-rows: 9px; margin-top: 8px; }

.history { top: 84px; right: 6px; width: 125px; height: 143px; }
.histbody { display: flex; }
.histlist { flex: 1; }
.histlist li { display: flex; align-items: center; gap: 1px; height: 15px; white-space: nowrap; border: 1px solid transparent; }
.histlist .current { background: #718e9f; border-color: #3f6577; }
.scroll { width: 13px; display: flex; flex-direction: column; align-items: center; justify-content: space-between; padding: 4px 0; }
.scrollthumb { width: 11px; height: 18px; margin-top: auto; margin-bottom: 4px; background: #8b8b8b; }
.histfoot { display: flex; padding: 1px; }

.layers { right: 25px; bottom: 52px; width: 125px; height: 143px; }
.layers .panelhead { height: 21px; }
.layer { display: flex; align-items: center; height: 39px; padding: 0 2px 0 3px; gap: 4px; }
.layer-on { background: #819dae; border: 1px solid #4f7488; padding: 0 1px 0 2px; }
.layerthumb { width: 31px; height: 18px; display: flex; justify-content: center; border: 1px solid #909090; flex: none; }
.checker { align-items: center; background: repeating-conic-gradient(#949494 0 25%, #b0b0b0 0 50%) 0 0 / 12px 12px; }
.layerthumb .mini { width: 18px; height: 10px; }
.layername { flex: 1; min-width: 0; white-space: nowrap; }
.tick { appearance: none; width: 10px; height: 10px; border: 1px solid #333; display: grid; place-items: center; flex: none; }
.tick:checked::after { content: ""; width: 6px; height: 3px; border: solid #222; border-width: 0 0 1px 1px; rotate: -45deg; }
.layerfoot { margin-top: auto; display: flex; justify-content: space-between; padding: 1px; border-top: 1px solid #9a9a9a; }

.toolmenu { position: absolute; top: 77px; left: 2px; width: 138px; border: 1px solid #6d7070; background: linear-gradient(to right, #a9acab 18px, #9fa2a1 18px, #9fa2a1 19px, #b0b1b1 19px); box-shadow: 2px 2px 3px rgba(0, 0, 0, .45); }
.toolmenu button { display: flex; align-items: center; gap: 8px; width: 100%; height: 18px; padding: 0 2px; border: 1px solid transparent; white-space: nowrap; text-align: left; }
.toolmenu .first { background: linear-gradient(to right, #8da5b1 17px, transparent 17px); }
.toolmenu .picked { background: #93a5b1; border-color: #64879b; }

.pointer { position: absolute; top: 190px; left: 80px; width: 210px; height: 140px; overflow: visible; }
.lens { position: absolute; top: 101px; left: 260px; width: 135px; height: 135px; border: 4px solid #f7e93f; border-radius: 50%; background: #fff; overflow: hidden; }
.lenslist { margin: -4px 0 0; font-family: "Open Sans", sans-serif; font-size: 13px; color: #333; background: linear-gradient(to right, transparent 27px, #d9e2e2 27px, #d9e2e2 28px, transparent 28px); }
.lenslist li { display: flex; align-items: center; gap: 14px; height: 27px; padding-left: 4px; white-space: nowrap; }
.lenslist li:first-child, .lenslist li:last-child { padding-left: 36px; }
.lenslist .lenspick { background: #dcebf8; border: 1px solid #8cb2cc; padding-left: 3px; }
```
